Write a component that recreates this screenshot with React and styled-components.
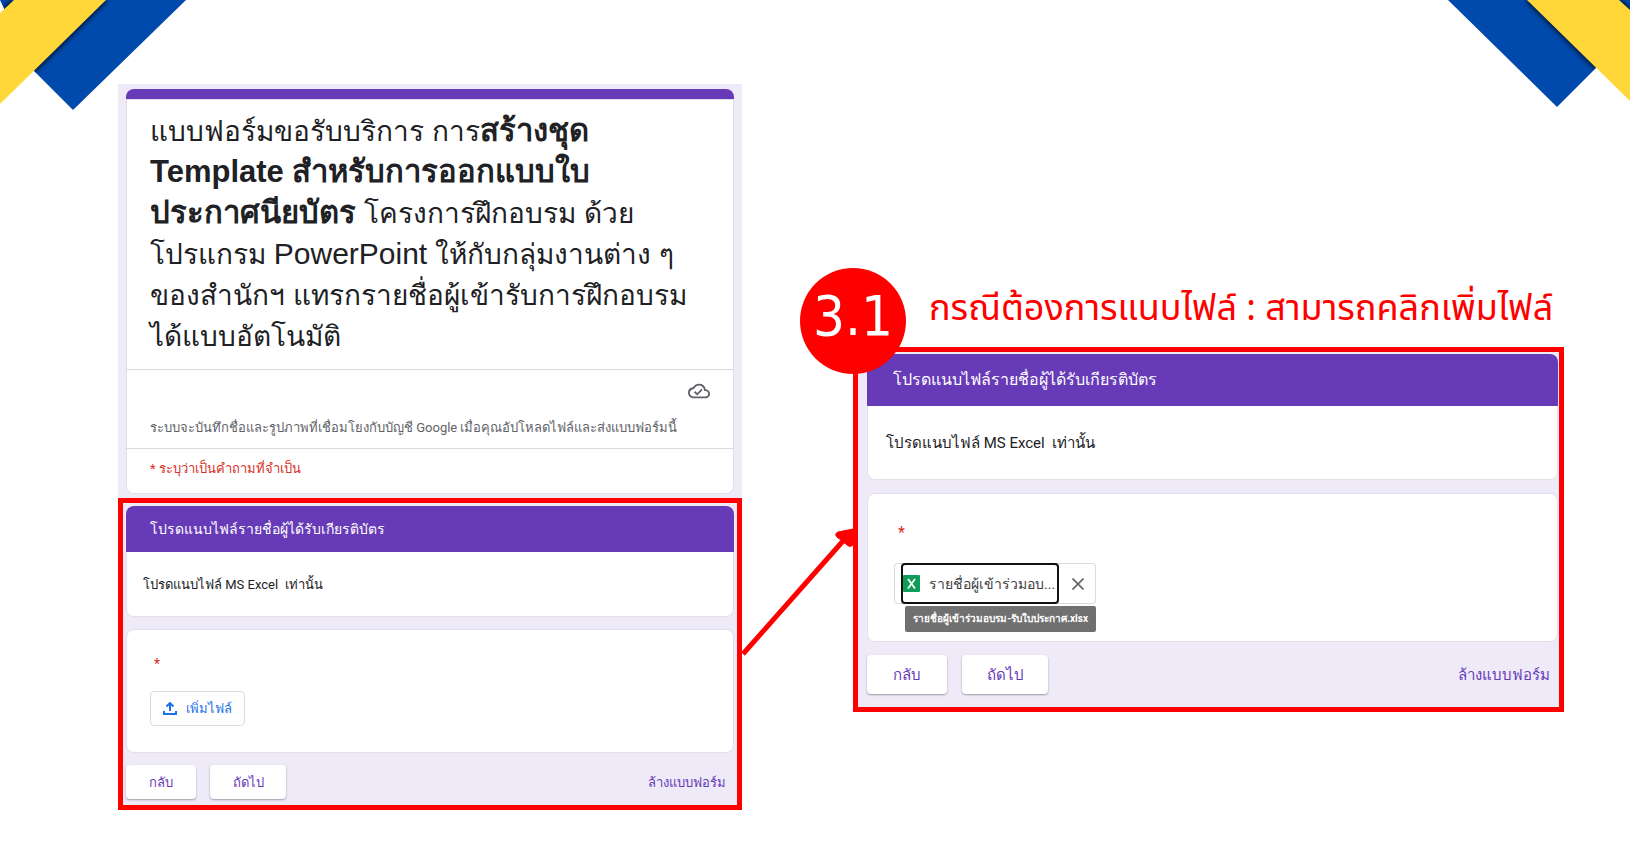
import React from 'react';
import styled, { createGlobalStyle, css } from 'styled-components';

const GlobalStyle = createGlobalStyle`
  * {
    box-sizing: border-box;
  }
  body {
    margin: 0;
    background: #fff;
    color: #202124;
    font-family: Roboto, sans-serif;
  }
`;

const UploadIcon = () => (
  <svg width="14" height="13" viewBox="1 1 14 13" fill="none" stroke="currentColor" strokeWidth="2" aria-hidden="true">
    <path d="M8 10V2.500M4.500 5.500L8 2l3.500 3.500M2 10V13h12V10" />
  </svg>
);

const CloudDoneIcon = () => (
  <svg width="22" height="22" viewBox="0 0 24 24" fill="#5f6368" aria-hidden="true">
    <path d="M19.35 10.04A7.49 7.49 0 0 0 12 4C9.11 4 6.6 5.64 5.35 8.04A5.994 5.994 0 0 0 0 14c0 3.31 2.69 6 6 6h13c2.76 0 5-2.24 5-5 0-2.64-2.05-4.78-4.65-4.96zM19 18H6c-2.21 0-4-1.79-4-4 0-2.05 1.53-3.76 3.56-3.97l1.07-.11.5-.95A5.469 5.469 0 0 1 12 6c2.62 0 4.88 1.86 5.39 4.43l.3 1.5 1.53.11A2.98 2.98 0 0 1 22 15c0 1.65-1.35 3-3 3zm-9-3.82l-2.09-2.09L6.5 13.5 10 17l6.01-6.01-1.41-1.41z" />
  </svg>
);

const ExcelIcon = () => (
  <svg width="17" height="17" viewBox="0 0 17 17" aria-hidden="true">
    <rect width="17" height="17" rx="1" fill="#0f9d58" />
    <path d="M5 4l7 9.500M12 4l-7 9.500" stroke="#fff" strokeWidth="1.800" />
  </svg>
);

const CloseIcon = () => (
  <svg width="12" height="12" viewBox="0 0 12 12" stroke="#5f6368" strokeWidth="1.600" aria-hidden="true">
    <path d="M.5.5l11 11M11.500.5l-11 11" />
  </svg>
);

const Arrow = () => (
  <ArrowSvg viewBox="0 0 111 135" aria-hidden="true">
    <path d="M1 131L101 18" stroke="#f00" strokeWidth="5" />
    <path d="M96 9L111 6L111 22Q108 25 105 22L95 14Q92 11 96 9Z" fill="#f00" stroke="#f00" strokeWidth="1" />
  </ArrowSvg>
);

const CornerRibbon = ({ side, blue, yellow, edge }) => (
  <Ribbon $side={side} viewBox="0 0 190 112" aria-hidden="true">
    <clipPath id={`ribbon-${side}`}>
      <path d={blue} />
    </clipPath>
    <path d={blue} fill="#004aad" />
    <g clipPath={`url(#ribbon-${side})`}>
      <Fold d={edge} />
    </g>
    <path d={yellow} fill="#ffd738" />
  </Ribbon>
);

const FormSection = ({ large, children }) => (
  <Frame $large={large}>
    <Card>
      <SectionTitle $large={large}>โปรดแนบไฟล์รายชื่อผู้ได้รับเกียรติบัตร</SectionTitle>
      <SectionText $large={large}>โปรดแนบไฟล์ MS Excel&nbsp; เท่านั้น</SectionText>
    </Card>
    <Question $large={large}>
      <Required $large={large}>*</Required>
      {children}
    </Question>
    <Actions $large={large}>
      <NavButton type="button" $large={large}>กลับ</NavButton>
      <NavButton type="button" $large={large} $wide>ถัดไป</NavButton>
      <ClearButton type="button" $large={large}>ล้างแบบฟอร์ม</ClearButton>
    </Actions>
  </Frame>
);

export default function App() {
  return (
    <Slide>
      <GlobalStyle />
      <CornerRibbon
        side="left"
        blue="M0 0H186L73 110L34 71Z"
        yellow="M14 0H106L0 104V13Z"
        edge="M106 0L34 71M14 0L0 13"
      />
      <CornerRibbon
        side="right"
        blue="M190 0H8L117 107L156 68L190 20Z"
        yellow="M179 0H87L190 101V10Z"
        edge="M87 0L156 68M179 0L190 10"
      />

      <Columns>
        <Panel>
          <TitleCard>
            <Title>
              แบบฟอร์มขอรับบริการ การ<b>สร้างชุด</b><br />
              <b>Template สำหรับการออกแบบใบ</b><br />
              <b>ประกาศนียบัตร</b> โครงการฝึกอบรม ด้วย<br />
              โปรแกรม <Latin>PowerPoint</Latin> ให้กับกลุ่มงานต่าง ๆ<br />
              ของสำนักฯ แทรกรายชื่อผู้เข้ารับการฝึกอบรม<br />
              ได้แบบอัตโนมัติ
            </Title>
            <Account>
              <CloudDoneIcon />
              <AccountText>ระบบจะบันทึกชื่อและรูปภาพที่เชื่อมโยงกับบัญชี Google เมื่อคุณอัปโหลดไฟล์และส่งแบบฟอร์มนี้</AccountText>
            </Account>
            <RequiredNote>* ระบุว่าเป็นคำถามที่จำเป็น</RequiredNote>
          </TitleCard>
          <FormSection>
            <AddFile type="button">
              <UploadIcon />
              เพิ่มไฟล์
            </AddFile>
          </FormSection>
        </Panel>

        <Arrow />

        <Step>
          <StepTitle>กรณีต้องการแนบไฟล์ : สามารถคลิกเพิ่มไฟล์</StepTitle>
          <StepBody>
            <FormSection large>
              <FileChip>
                <FileButton type="button">
                  <ExcelIcon />
                  รายชื่อผู้เข้าร่วมอบ...
                </FileButton>
                <RemoveButton type="button" aria-label="ลบไฟล์">
                  <CloseIcon />
                </RemoveButton>
                <Tooltip role="tooltip">รายชื่อผู้เข้าร่วมอบรม-รับใบประกาศ.xlsx</Tooltip>
              </FileChip>
            </FormSection>
            <Badge>3.1</Badge>
          </StepBody>
        </Step>
      </Columns>
    </Slide>
  );
}

const Slide = styled.main`
  position: relative;
  min-height: 100vh;
  overflow: hidden;
`;

const Ribbon = styled.svg`
  position: absolute;
  top: 0;
  ${(p) => p.$side}: 0;
  width: 190px;
  height: 112px;
`;

const Fold = styled.path`
  stroke: rgba(0, 0, 0, 0.7);
  stroke-width: 4px;
  filter: blur(2px);
`;

const Columns = styled.div`
  display: grid;
  grid-template-columns: minmax(0, 624fr) 111px minmax(0, 711fr);
  align-items: start;
  padding: 84px 66px 50px 118px;
`;

const ArrowSvg = styled.svg`
  width: 111px;
  height: 135px;
  margin-top: 439px;
`;

const Panel = styled.section`
  background: #eeeaf8;
`;

const Card = styled.div`
  background: #fff;
  border-radius: 8px;
  box-shadow: inset 0 0 0 1px #e2dfea;
  overflow: hidden;
`;

const TitleCard = styled(Card)`
  margin: 5px 8px 4px;
  border-top: 10px solid #673ab7;
`;

const Title = styled.h1`
  margin: 0;
  padding: 12px 24px;
  font: 400 28px/41px 'Liberation Sans', Arial, sans-serif;
  white-space: nowrap;

  b {
    font-size: 31px;
    line-height: 1;
  }
`;

const Latin = styled.span`
  font-size: 30px;
  line-height: 1;
`;

const Account = styled.div`
  display: flex;
  flex-direction: column;
  padding: 10px 24px 10px;
  border-top: 1px solid #dadce0;
  border-bottom: 1px solid #dadce0;

  svg {
    align-self: flex-end;
  }
`;

const AccountText = styled.p`
  margin: 16px 0 0;
  color: #5f6368;
  font-size: 13px;
  line-height: 20px;
  white-space: nowrap;
`;

const RequiredNote = styled.p`
  margin: 0;
  padding: 10px 24px 15px;
  color: #d93025;
  font-size: 13px;
  line-height: 20px;
`;

const Frame = styled.div`
  border: 5px solid #f00;
  background: #eeeaf8;
  padding: ${(p) => (p.$large ? '2px 1px 13px 9px' : '3px 3px 6px')};
`;

const SectionTitle = styled.h2`
  margin: 0;
  padding: 0 ${(p) => (p.$large ? 26 : 24)}px;
  background: #673ab7;
  color: #fff;
  font-weight: 400;
  font-size: ${(p) => (p.$large ? 16 : 14)}px;
  line-height: ${(p) => (p.$large ? 52 : 46)}px;
`;

const SectionText = styled.p`
  margin: 0;
  padding: 0 ${(p) => (p.$large ? 19 : 17)}px;
  font-size: ${(p) => (p.$large ? 15 : 13)}px;
  line-height: ${(p) => (p.$large ? 74 : 65)}px;
`;

const Question = styled.div`
  margin: ${(p) => (p.$large ? '13px 0' : '12px 0')};
  padding: ${(p) => (p.$large ? '27px 26px 37px' : '22px 23px 26px')};
  background: #fff;
  border: 1px solid #e2dfea;
  border-radius: 8px;
`;

const Required = styled.div`
  padding-left: 4px;
  color: #d93025;
  font-size: ${(p) => (p.$large ? 16 : 14)}px;
  line-height: 24px;
  margin-bottom: ${(p) => (p.$large ? 18 : 15)}px;
`;

const buttonReset = css`
  display: flex;
  align-items: center;
  border: 0;
  background: none;
  padding: 0;
  font-family: inherit;
  white-space: nowrap;
  cursor: pointer;
`;

const AddFile = styled.button`
  ${buttonReset}
  gap: 9px;
  height: 35px;
  padding: 0 12px;
  border: 1px solid #dadce0;
  border-radius: 4px;
  color: #1a73e8;
  font-size: 13px;
  font-weight: 500;
`;

const Actions = styled.div`
  display: flex;
  align-items: center;
  gap: ${(p) => (p.$large ? 15 : 14)}px;
`;

const NavButton = styled.button`
  ${buttonReset}
  justify-content: center;
  width: ${(p) => (p.$large ? 80 : 70) + (p.$wide ? 6 : 0)}px;
  height: ${(p) => (p.$large ? 39 : 34)}px;
  border-radius: 4px;
  background: #fff;
  box-shadow: 0 1px 2px rgba(0, 0, 0, 0.35);
  color: #673ab7;
  font-size: ${(p) => (p.$large ? 15 : 13)}px;
  font-weight: 500;
`;

const ClearButton = styled.button`
  ${buttonReset}
  margin-left: auto;
  padding-right: 8px;
  color: #673ab7;
  font-size: ${(p) => (p.$large ? 15 : 13)}px;
  font-weight: 500;
`;

const FileChip = styled.div`
  position: relative;
  display: flex;
  width: 202px;
  height: 41px;
  padding-left: 7px;
  border-radius: 4px;
  box-shadow: inset 0 0 0 1px #dadce0;
`;

const FileButton = styled.button`
  ${buttonReset}
  flex: 1;
  gap: 9px;
  border: 2px solid #111;
  border-radius: 4px;
  color: #3c4043;
  font-size: 14px;
`;

const RemoveButton = styled.button`
  ${buttonReset}
  justify-content: center;
  width: 37px;
`;

const Tooltip = styled.span`
  position: absolute;
  top: 43px;
  right: 0;
  padding: 0 8px;
  border-radius: 2px;
  background: #707070;
  color: #fff;
  font-size: 10px;
  font-weight: 700;
  line-height: 26px;
  white-space: nowrap;
`;

const Step = styled.section`
  padding-top: 201px;
`;

const StepTitle = styled.h2`
  margin: 0 0 14px;
  padding-left: 76px;
  color: #f00;
  font: 400 36px/48px 'Noto Sans Thai', 'Noto Sans', sans-serif;
  white-space: nowrap;
`;

const StepBody = styled.div`
  position: relative;
`;

const Badge = styled.div`
  position: absolute;
  top: -79px;
  left: -53px;
  width: 106px;
  height: 106px;
  border-radius: 50%;
  background: #f00;
  color: #fff;
  font: 400 56px/96px 'DejaVu Sans Condensed', 'DejaVu Sans', sans-serif;
  text-align: center;
`;
